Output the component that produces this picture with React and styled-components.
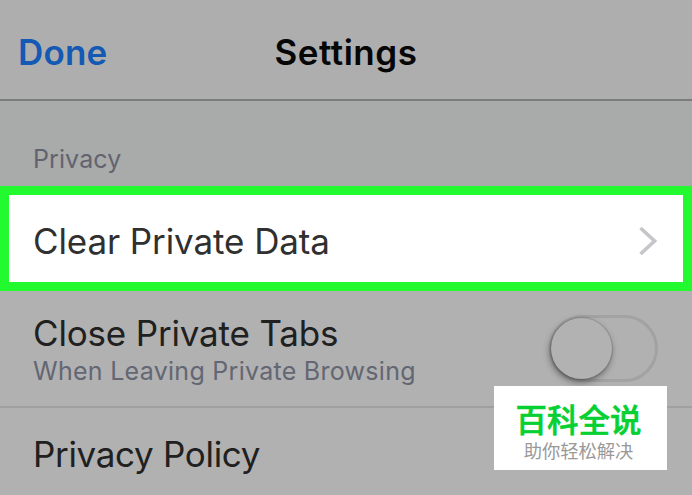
import React, { useState } from 'react';
import styled, { createGlobalStyle } from 'styled-components';

const GlobalStyle = createGlobalStyle`
  body {
    margin: 0;
    background: #b1b1b1;
    font-family: Inter, "Liberation Sans", sans-serif;
  }
`;

const Screen = styled.div`
  position: relative;
  display: flex;
  flex-direction: column;
  width: 692px;
  height: 495px;
  overflow: hidden;
  background: #b1b1b1;
`;

const NavBar = styled.header`
  display: grid;
  flex-shrink: 0;
  grid-template-columns: 1fr auto 1fr;
  align-items: center;
  box-sizing: border-box;
  height: 101px;
  padding: 4px 18px 0;
  background: #aeaeae;
  border-bottom: 2px solid #7b7c7b;
`;

const DoneButton = styled.button`
  justify-self: start;
  padding: 0;
  border: 0;
  background: none;
  color: #1459b3;
  font: 600 35px/42px Inter, "Liberation Sans", sans-serif;
  letter-spacing: 0.2px;
`;

const Title = styled.h1`
  margin: 0;
  color: #060606;
  font-size: 35px;
  font-weight: 600;
  line-height: 42px;
  letter-spacing: 0.5px;
`;

const SectionHeader = styled.h2`
  flex-shrink: 0;
  box-sizing: border-box;
  height: 85px;
  margin: 0;
  padding: 43px 33px 0;
  background: #a9abaa;
  color: #636370;
  font-size: 25px;
  font-weight: 400;
  line-height: 30px;
  letter-spacing: 0.1px;
`;

const Row = styled.div`
  display: flex;
  flex-shrink: 0;
  align-items: center;
  justify-content: space-between;
  box-sizing: border-box;
  height: ${props => props.$height}px;
  padding: 0 34px 0 33px;
  border-bottom: 2px solid #a0a0a1;
`;

const HighlightedRow = styled(Row)`
  padding: 4px 26px 0 24px;
  background: #fff;
  border: 9px solid #22f92f;
`;

const Label = styled.div`
  color: ${props => props.$color || '#202020'};
  font-size: 35px;
  line-height: 42px;
  letter-spacing: ${props => props.$spacing || 0}px;
`;

const LabelGroup = styled.div`
  padding-top: 3px;
`;

const Detail = styled.div`
  color: #636673;
  font-size: 25px;
  line-height: 34px;
  letter-spacing: 0.28px;
`;

const Switch = styled.button`
  box-sizing: border-box;
  width: 109px;
  height: 67px;
  padding: 0;
  border: 3px solid #a2a2a2;
  border-radius: 34px;
  background: #b1b1b1;
`;

const Knob = styled.span`
  display: block;
  width: 61px;
  height: 61px;
  border-radius: 50%;
  background: #b2b2b2;
  box-shadow: 0 0 1px 1px rgba(0, 0, 0, 0.12), -1px 3px 7px rgba(0, 0, 0, 0.45);
  transform: translateX(${props => (props.$on ? 42 : -1)}px);
`;

const Badge = styled.aside`
  position: absolute;
  top: 386px;
  left: 494px;
  box-sizing: border-box;
  width: 173px;
  height: 84px;
  padding: 12px 4px 0 0;
  background: #fff;
  text-align: center;
  font-family: "Noto Sans CJK SC", sans-serif;
`;

const BadgeTitle = styled.div`
  color: #06d032;
  font-size: 31.5px;
  font-weight: 500;
  line-height: 41px;
  -webkit-text-stroke: 0.6px #06d032;
`;

const BadgeText = styled.div`
  color: #999;
  font-size: 18.3px;
  line-height: 22px;
`;

const App = () => {
  const [closeTabs, setCloseTabs] = useState(false);

  return (
    <Screen>
      <GlobalStyle />
      <NavBar>
        <DoneButton>Done</DoneButton>
        <Title>Settings</Title>
      </NavBar>
      <SectionHeader>Privacy</SectionHeader>
      <HighlightedRow $height={105}>
        <Label $color="#303030" $spacing={-0.1}>Clear Private Data</Label>
        <svg width="18" height="30" viewBox="0 0 18 30" fill="none">
          <path d="M1.5 2 L15.5 15 L1.5 28" stroke="#c6c6ca" strokeWidth="3.6" />
        </svg>
      </HighlightedRow>
      <Row $height={117}>
        <LabelGroup>
          <Label $spacing={-0.17}>Close Private Tabs</Label>
          <Detail>When Leaving Private Browsing</Detail>
        </LabelGroup>
        <Switch role="switch" aria-checked={closeTabs} onClick={() => setCloseTabs(!closeTabs)}>
          <Knob $on={closeTabs} />
        </Switch>
      </Row>
      <Row $height={94}>
        <Label $spacing={-0.32}>Privacy Policy</Label>
      </Row>
      <Badge>
        <BadgeTitle>百科全说</BadgeTitle>
        <BadgeText>助你轻松解决</BadgeText>
      </Badge>
    </Screen>
  );
};

export default App;
